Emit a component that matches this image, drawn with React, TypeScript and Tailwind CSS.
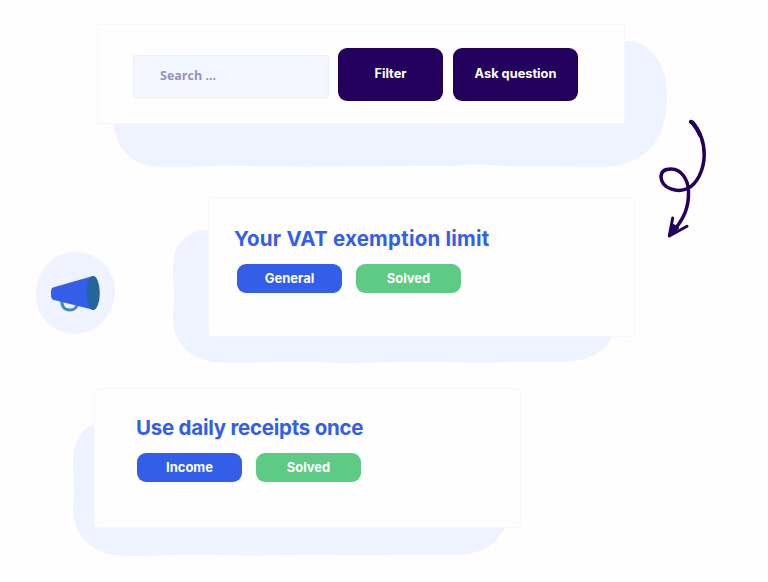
import type { ReactNode } from "react";

function Blob({ d }: { d: string }) {
  return (
    <svg
      className="absolute left-0 top-0 h-full w-full overflow-visible"
      fill="#eff3ff"
      aria-hidden="true"
    >
      <path d={d} />
    </svg>
  );
}

function Button({ children, className }: { children: ReactNode; className: string }) {
  return (
    <button
      className={`h-[53px] rounded-[9px] bg-[#22005c] pb-[2px] text-[12.8px] font-bold text-white ${className}`}
    >
      {children}
    </button>
  );
}

function Tag({ children, className }: { children: ReactNode; className: string }) {
  return (
    <span
      className={`flex h-[29px] w-[105px] items-center justify-center rounded-[9px] text-[13px] font-bold text-white ${className}`}
    >
      {children}
    </span>
  );
}

function Megaphone() {
  return (
    <svg width="80" height="84" viewBox="0 0 80 84" className="mt-[54px]">
      <path
        d="M39 1C60 1 79 17 79 40C79 64 60 83 39 83C17 83 0 66 0 43C0 20 17 1 39 1Z"
        fill="#eff3ff"
      />
      <path d="M26 48C25 55 28 59 34 59C39 59 41 56 42 52" fill="none" stroke="#4588bd" strokeWidth="3" />
      <path
        d="M17 36.5L56 25.3Q60 25 61 32V52Q60 59 56 58.5L17 48.8Q15 48 15 45V40Q15 37.3 17 36.5Z"
        fill="#335eea"
      />
      <ellipse cx="57.2" cy="42" rx="6.6" ry="17" fill="#24659a" />
    </svg>
  );
}

function Arrow() {
  return (
    <svg
      className="absolute left-[650px] top-[112px]"
      width="70"
      height="132"
      viewBox="0 0 70 132"
      fill="none"
      stroke="#22005c"
      strokeWidth="3.5"
      strokeLinecap="round"
      strokeLinejoin="round"
    >
      <path d="M42 10.5C50 19 54.3 31 54.2 43C54 58 47 72 37.5 76.5C28 81 11.5 77 11 65C11 59 15 57 21 57C31 57 38 67 38.5 79C39 94 35 107 20 122.500" />
      <path d="M41 10L42.500 10.500C46 15 48.500 19 50 23" strokeWidth="4.2" />
      <path d="M22.7 106L19.300 124L37 114.300" strokeWidth="3" />
      <path d="M19.500 124L23.500 113L28 116Z" fill="#22005c" strokeWidth="2" />
    </svg>
  );
}

export default function App() {
  return (
    <main className="relative h-[582px] w-[768px] overflow-hidden bg-[#fefefe] pt-6 font-['Inter',sans-serif]">
      <section className="relative ml-[97px] h-[100px] w-[528px]">
        <Blob d="M16 90C16 125 35 143 66 143C105 143 120 141 155 142C220 144 300 141 360 142C382 139 395 143 430 142L500 143C545 144 570 120 570 72C570 38 552 16 528 17L16 60Z" />
        <div className="relative flex h-full items-start gap-[10px] border border-[#f5f7ff] bg-[#fefefe] pl-[35px] pt-[23px]">
          <input
            className="mr-[-1px] mt-[7px] h-[43px] w-[196px] rounded-[2px] border border-[#e9effc] bg-[#f4f7ff] pb-[2px] pl-[26px] font-['Open_Sans',sans-serif] text-[12.5px] font-bold text-[#9990be] outline-none placeholder:text-[#9990be]"
            placeholder="Search ..."
          />
          <Button className="w-[105px]">Filter</Button>
          <Button className="w-[125px]">Ask question</Button>
        </div>
      </section>

      <div className="mt-[73px] flex items-start pl-[36px]">
        <Megaphone />
        <section className="relative ml-[92px] h-[140px] w-[427px]">
          <Blob d="M0 33C-22 33 -35 47 -35 72C-35 82 -34 90 -34 98C-34 106 -35 115 -35 121C-34 150 -15 166 20 166C60 166 75 164 110 165C150 168 190 164 230 165C270 167 310 164 350 165C380 165 396 156 405 139V33Z" />
          <div className="relative h-full rounded border border-[#f5f7ff] bg-[#fefefe] pl-[25px] pt-[26px]">
            <h2 className="whitespace-nowrap text-[20.5px] font-bold leading-[30px] tracking-[0.22px] text-[#335eea]">
              Your VAT exemption limit
            </h2>
            <div className="mt-[10px] flex gap-[14px] pl-[3px]">
              <Tag className="bg-[#335eea]">General</Tag>
              <Tag className="bg-[#5dcb83]">Solved</Tag>
            </div>
          </div>
        </section>
      </div>

      <section className="relative ml-[94px] mt-[51px] h-[140px] w-[427px]">
        <Blob d="M0 36C-14 42 -21 55 -21 75C-21 85 -20 92 -20 102C-20 110 -21 114 -21 121C-20 151 0 168 34 168C75 168 85 166 123 167C163 169 200 166 240 167C280 168 315 166 355 167C387 168 402 157 411 139V36Z" />
        <div className="relative h-full rounded border border-[#f5f7ff] bg-[#fefefe] pl-[42px] pt-[24px]">
          <h2 className="ml-[-1px] whitespace-nowrap text-[20.5px] font-bold leading-[30px] tracking-[-0.25px] text-[#335eea]">
            Use daily receipts once
          </h2>
          <div className="mt-[10px] flex gap-[14px]">
            <Tag className="bg-[#335eea]">Income</Tag>
            <Tag className="bg-[#5dcb83]">Solved</Tag>
          </div>
        </div>
      </section>
      <Arrow />
    </main>
  );
}
